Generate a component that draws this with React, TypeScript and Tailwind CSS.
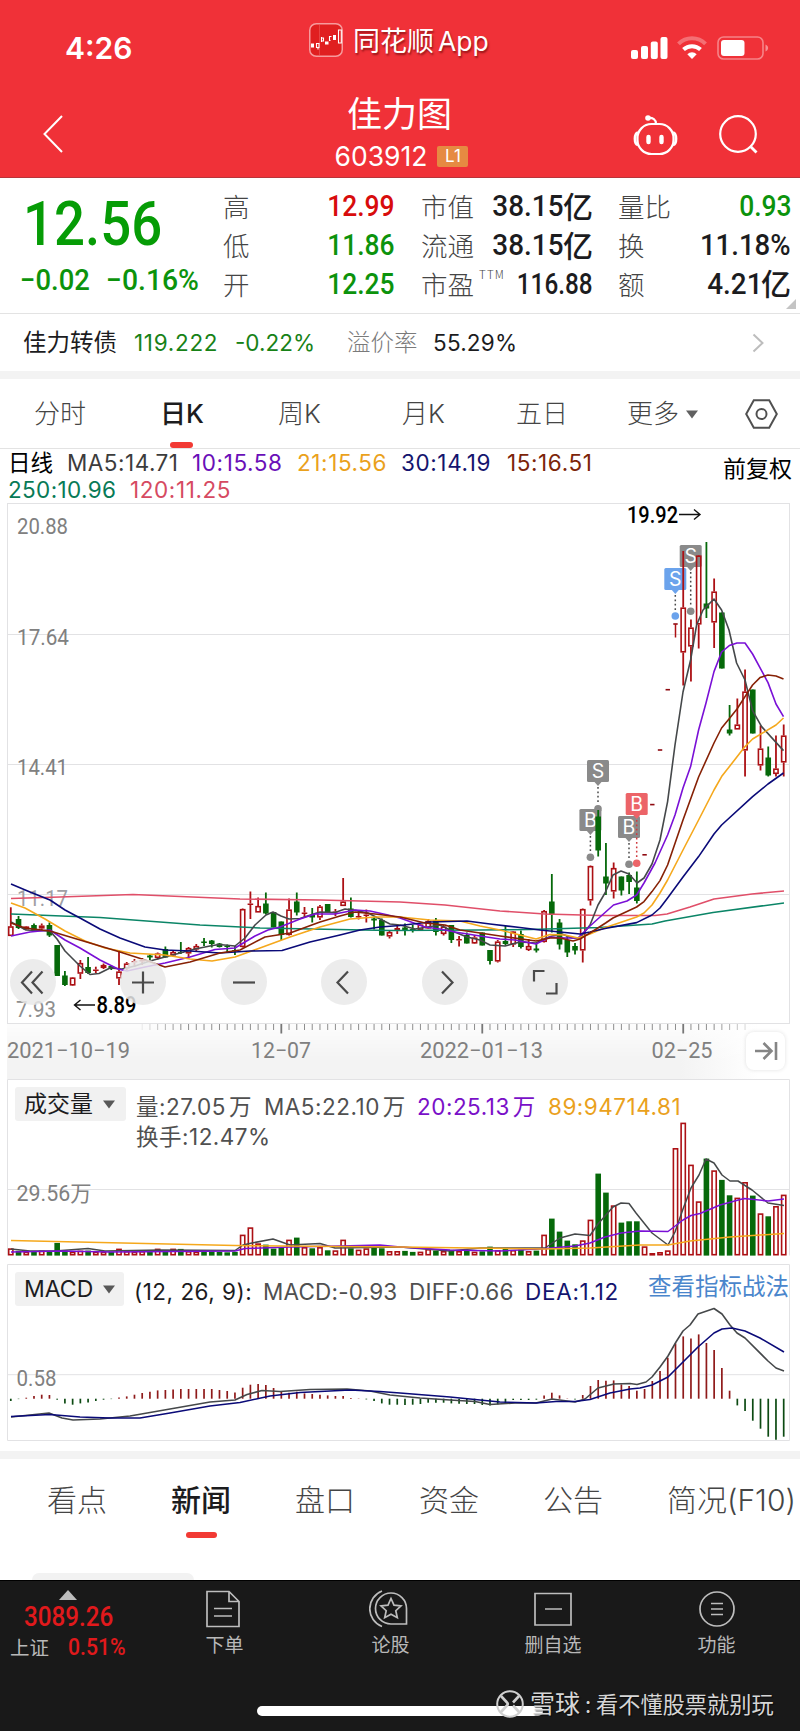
import type { ReactNode } from "react";

type Point = [number, number];
// [high, bodyTop, bodyBottom, low, rising]
type Candle = [number, number, number, number, 0 | 1];

const STEP = 7.729;
const slotX = (i: number) => 10.8 + i * STEP;

const RED = "#ac1014";
const GREEN = "#06690a";

const CANDLES: Candle[] = [
  [907.3, 926.3, 936, 936, 1], [916, 919, 928, 929, 0], [926, 926.5, 929.5, 930, 1], [923.5, 925, 930, 931, 0],
  [923.5, 925.5, 928.5, 931, 1], [922.5, 925, 935.5, 937, 0], [945, 945, 976, 976, 0], [971, 975.5, 985, 986, 0],
  [977, 977.5, 985.5, 986, 1], [960, 963, 973.7, 979, 1], [957, 967, 973, 974, 0], [966.7, 969.5, 971, 973, 1],
  [963.5, 965, 968, 969, 1], [965, 966, 968.5, 970, 0], [950, 971.5, 978.5, 985, 1], [962, 963.5, 968.5, 970, 1],
  [959, 961, 962.5, 967, 1], [958, 960, 961.5, 965, 1], [954.5, 955.5, 957.5, 961, 0], [952.5, 953.5, 958, 959.5, 1],
  [946.5, 949, 957.5, 957.5, 0], [951, 952, 955.5, 956, 1], [942, 952, 953, 954, 0], [947, 948, 953.5, 957, 1],
  [944, 946, 949.5, 951, 1], [938, 941.5, 943, 946, 0], [940, 940.5, 944, 947.5, 0], [943, 943.5, 947, 947.5, 0],
  [944.5, 946, 947, 953, 0], [946, 950, 951, 955, 0], [908.5, 909, 947, 947.5, 1], [891.5, 903.5, 905, 919, 1],
  [897.5, 906, 912.5, 912.5, 1], [892.5, 903.5, 913.5, 914.5, 0], [912, 912, 927.5, 927.5, 0], [921.5, 921.5, 935, 940, 0],
  [898.5, 909.5, 935, 935.5, 1], [892.5, 901.5, 912.5, 915.5, 0], [907, 912.5, 914, 918, 1], [908, 915, 917.5, 922.5, 0],
  [905, 906.5, 917.5, 920, 1], [904, 904, 912.5, 912.5, 0], [909, 911.5, 912.5, 916, 1], [878, 901.5, 906, 906, 1],
  [897.5, 908.5, 917, 917.5, 0], [910, 916, 917.5, 919.5, 1], [909.5, 914.5, 916, 922.5, 1], [917, 918.5, 920.5, 929.5, 0],
  [918.5, 920, 935.5, 935.5, 0], [930, 932, 936.5, 938.5, 1], [926, 928, 930, 934, 1], [923.5, 927.5, 931, 935.5, 0],
  [925, 929, 930.5, 932.5, 0], [924, 924.5, 930, 930, 1], [919, 921, 928.5, 929, 1], [918, 920.5, 932, 935.5, 0],
  [925, 926.5, 934, 935.5, 1], [925, 925, 940, 943, 0], [936, 939, 940.5, 946.5, 1], [932.5, 935, 943.5, 943.5, 0],
  [935, 937.5, 943.5, 944, 1], [932.5, 932.5, 945.5, 945.5, 0], [950, 950, 961, 964.5, 0], [940, 941.5, 961.5, 962.5, 1],
  [926, 941, 944, 945.5, 0], [931, 931.5, 944.5, 947, 1], [930.5, 934, 947, 948.5, 0], [939, 946, 950, 951, 1],
  [944, 948.5, 950.5, 952.5, 0], [910, 911, 942, 942.5, 1], [874, 901.5, 915, 932.5, 0], [919, 922.5, 944.5, 949.5, 0],
  [936, 940, 952.5, 957, 0], [943, 946, 950.5, 954.5, 0], [908.5, 909, 950.5, 962.5, 1], [865.5, 866, 900.5, 905.5, 1],
  [810, 816.5, 850.5, 856.5, 0], [843, 876.5, 883.5, 895, 0], [862.5, 868, 891.5, 898.5, 1], [876.5, 876.5, 890.5, 895.5, 0],
  [872.5, 875, 882, 894, 0], [871.5, 887.5, 901, 903.5, 0], [854.8, 854.8, 854.8, 854.8, 1], [804.6, 804.6, 804.6, 804.6, 1],
  [750, 750, 750, 750, 1], [689.7, 689.7, 689.7, 689.7, 1], [624, 624, 624, 637.5, 1], [551, 607.5, 652.5, 685.5, 1],
  [619.5, 627.5, 646.5, 681.5, 1], [555, 555.5, 624.5, 648.5, 1], [542, 603.5, 608.5, 618, 0], [578.5, 591.5, 622.5, 648, 1],
  [612.5, 612.5, 668.5, 668.5, 0], [705, 729.5, 733.5, 735.5, 0], [698.5, 724.5, 729.5, 729.5, 1], [669.5, 691.5, 750.5, 776.5, 1],
  [689.5, 689.5, 733.5, 733.5, 0], [725.5, 748.5, 765.5, 770.5, 1], [746.5, 757.5, 775.5, 776.5, 0], [735.5, 768.5, 774, 776.5, 1],
  [724.5, 735.5, 762.5, 776.5, 1],
];

// bar heights in px
const VOLUMES = [
  7, 4.7, 3.7, 3.7, 4.7, 4.3, 12.7, 5, 3.7, 4.7, 5, 3.7, 3.7, 3.7, 6.7, 4.3, 3.7, 4.3, 4.3, 6.7, 4.3, 6.7, 6.7, 4.3, 3.7, 5, 4.3,
  3.7, 3.3, 3.7, 20.7, 28, 12, 11, 7, 8, 15.7, 18, 8.3, 7.3, 8.3, 5.3, 5, 15.7, 7.3, 5.7, 7, 7.7, 7.3, 4.3, 4.3, 4.7, 3.7, 3.7,
  6.3, 5, 4.3, 5.7, 4.3, 5.3, 3.7, 4.3, 9, 5.3, 7.7, 5.3, 6, 4.3, 5, 20.7, 37, 24, 15, 11.3, 15, 35.7, 82, 63, 50, 33, 34.3,
  34.3, 9, 2.3, 3.3, 5, 107.3, 132.7, 90.7, 54, 97, 85, 75.7, 60.3, 57.7, 73.3, 60, 42, 39.3, 49.3, 60.7,
];

const MACD_BARS = [
  -2.3, -0.4, 1, 2.7, 4, 3.7, -1, -4.7, -6, -4.7, -3.7, -2.3, -1, -0.4, 1.3, 2.3, 4, 5.7, 7, 8.3, 8.7, 9.3, 9.7, 9.7, 9.7, 9.7, 9.7,
  8.7, 7.7, 6.3, 11, 14, 14.7, 13.7, 10.7, 7, 6, 7, 5.3, 4.7, 4, 3.3, 2.7, 2.7, 0.7, 0.3, -0.7, -2.3, -4.7, -6, -6, -6.3, -6,
  -5.3, -4, -4, -4, -4.7, -5, -5.3, -5.3, -6.3, -6.7, -5.7, -4.7, -1.3, -1.3, -1.3, -1, 3.3, 6, 3.3, 0.3, -0.7, 3.7, 12.7, 18.7,
  18, 18.3, 14.3, 12.7, 8, 9.7, 17.7, 27.7, 41, 55.3, 62.3, 60.3, 64.3, 55.7, 48.7, 30.7, 8, -6.7, -12.3, -22, -30, -38, -41, -38,
];

const PRICE_LINES: { color: string; points: Point[] }[] = [
  {
    color: "#e04f69",
    points: [[11, 898.5], [60, 897], [133, 894.5], [240, 899], [320, 900], [400, 902], [445, 905], [500, 911], [545, 914], [600, 915.5], [655, 915.5], [667, 914], [690, 907], [714, 899], [752, 894], [784, 891]],
  },
  {
    color: "#0b8567",
    points: [[11, 914], [100, 917.5], [200, 925], [260, 928], [390, 930.5], [480, 930], [530, 929.5], [600, 927.5], [652, 924], [665, 921], [713, 912.5], [784, 903]],
  },
  {
    color: "#45484a",
    points: [[11, 922], [26, 930], [50, 931], [57, 939], [65, 951], [80, 966], [90, 974.5], [99, 973.5], [110, 968], [122, 969], [135, 966], [150, 961], [165, 957], [180, 953], [195, 949], [210, 946], [219, 944.5], [235, 946], [245, 938], [255, 925], [266, 915], [273, 912], [281, 916], [289, 919], [300, 918.5], [312, 914.5], [320, 912], [335, 912.5], [345, 909], [356, 910.5], [368, 913], [380, 919], [390, 924], [400, 925], [415, 929], [440, 925], [452, 931], [467, 937], [480, 940], [490, 945], [505, 946], [520, 942], [536, 943], [545, 938.5], [552, 936], [562, 934], [572, 938], [580, 938], [590, 925], [598, 905], [605, 893], [613, 875], [621, 871], [629, 874], [637, 883], [644, 878], [652, 864], [660, 840], [667.6, 801.6], [675, 745], [683, 692], [690.6, 660], [696.6, 625], [703, 610], [714, 599], [721.6, 610], [729, 630], [736.6, 663], [745, 680], [752.6, 710.6], [761.6, 726.6], [783.5, 750.6]],
  },
  {
    color: "#7a10d6",
    points: [[11, 936], [30, 932], [50, 930], [65, 940], [80, 948], [100, 960], [118, 969], [127, 971], [145, 967], [165, 963], [190, 957], [215, 949.5], [235, 948], [255, 936], [268, 930], [280, 927], [300, 919], [315, 914], [335, 914], [355, 910], [370, 911], [388, 915], [400, 918], [425, 927], [440, 929], [455, 932], [480, 936], [500, 939], [515, 940], [536, 944], [550, 937], [565, 938], [578, 938], [590, 926], [600, 917], [613.5, 905], [627, 901], [636.6, 895], [644, 883], [655, 863], [667.6, 835], [675, 815], [683, 788], [690.6, 766.6], [698.6, 730], [706, 703], [714, 671.6], [721.6, 652], [729.3, 645.6], [737, 643], [745, 643], [752.6, 654], [768, 682.6], [776, 704], [783.5, 716.6]],
  },
  {
    color: "#f5a81c",
    points: [[11, 903], [25, 908], [45, 919], [65, 931], [85, 941], [105, 948], [130, 953], [165, 955], [190, 959], [212, 961], [235, 957], [260, 948], [290, 937], [320, 927], [350, 919], [375, 917], [400, 917], [430, 920], [460, 921], [480, 926], [500, 930], [520, 935], [536, 939], [550, 934.5], [565, 935], [578, 938], [590, 934], [604, 928], [636.6, 917], [644, 913], [652, 905], [660, 893], [667.6, 880], [683, 850], [698.6, 820], [714, 790], [721.6, 776.6], [745, 746.6], [752.6, 739], [776, 725], [783.5, 718]],
  },
  {
    color: "#0a0a78",
    points: [[11, 884], [30, 892], [50, 900], [65, 910], [80, 918], [100, 929], [120, 938], [145, 947], [165, 950], [190, 951], [220, 953], [250, 951], [282, 950.5], [310, 942], [340, 935], [360, 930], [380, 927], [400, 925.5], [430, 922], [467, 921], [490, 924], [520, 927.5], [540, 930], [560, 932], [580, 934], [590, 932], [605, 928.5], [636.6, 922.6], [652, 915], [660, 908], [667.6, 898], [683, 877], [698.6, 856.6], [714, 834], [721.6, 825], [752.6, 796.6], [768, 784], [783.5, 773]],
  },
  {
    color: "#862105",
    points: [[11, 923], [25, 928], [50, 931], [70, 937], [90, 943], [120, 952], [145, 960], [165, 967], [190, 962], [220, 953], [240, 950], [265, 937], [290, 933], [320, 922], [340, 916], [355, 912], [375, 914], [400, 917], [425, 923], [445, 925], [460, 930], [480, 933], [500, 936], [536, 941], [550, 938], [560, 938], [573, 941], [580, 939], [590, 933], [605.6, 923], [613, 918], [636.6, 907], [644, 901.6], [652, 891.6], [660, 880.6], [667.6, 865], [683, 820], [698.6, 777], [714, 743], [721.6, 728], [729, 719], [737, 709], [745, 696.6], [752.6, 685], [760, 677.6], [768, 675], [776, 676], [783.5, 679]],
  },
];

const VOLUME_LINES: { color: string; points: Point[] }[] = [
  {
    color: "#45484a",
    points: [[11, 1249], [30, 1251], [55, 1251], [88, 1248.5], [105, 1251], [160, 1250], [235, 1250.5], [243, 1245], [252, 1243], [273, 1239], [290, 1245], [320, 1243.5], [335, 1248], [400, 1247], [450, 1251], [480, 1248], [545, 1248], [560, 1238], [575, 1234], [590, 1235.5], [598, 1224], [605, 1216], [613, 1207], [621, 1203], [629, 1203.5], [636, 1213], [652, 1233], [668, 1245], [675, 1232], [683, 1209], [691, 1188], [699, 1175], [706, 1159], [714, 1163], [722, 1175], [730, 1181], [738, 1181], [752, 1190], [768, 1203], [784, 1205.5]],
  },
  {
    color: "#7a10d6",
    points: [[11, 1252], [60, 1251], [110, 1252], [235, 1251], [245, 1248.5], [290, 1247], [340, 1246], [380, 1245], [400, 1247], [450, 1250], [500, 1251], [540, 1249], [575, 1246], [590, 1243], [605, 1237], [621, 1233], [640, 1231], [668, 1231.5], [683, 1220], [691, 1215.5], [700, 1213.5], [720, 1205], [744, 1198.5], [768, 1201], [784, 1199]],
  },
  {
    color: "#f5a81c",
    points: [[11, 1240.5], [235, 1245.5], [400, 1247], [545, 1249], [590, 1248], [640, 1245], [668, 1245], [690, 1241], [730, 1237], [784, 1233.5]],
  },
];

const MACD_LINES: { color: string; points: Point[] }[] = [
  {
    color: "#45484a",
    points: [[11, 1417], [30, 1415], [49, 1413], [62, 1418], [73, 1420], [100, 1419], [130, 1416], [170, 1409], [210, 1402], [235, 1400], [247, 1394.5], [262, 1390.5], [280, 1391.5], [310, 1389.5], [347, 1389], [370, 1391], [390, 1395], [400, 1396], [420, 1398], [450, 1400], [475, 1401.5], [490, 1404.5], [515, 1403], [536, 1403], [552, 1399], [575, 1402], [585, 1399], [598, 1388], [614, 1384], [630, 1383.5], [637, 1384.5], [646, 1382], [652, 1377], [660, 1367], [668, 1356], [676, 1342], [683, 1331], [690, 1325], [698, 1314], [714, 1308.5], [722, 1314], [730, 1325], [737, 1333], [745, 1338], [768, 1361], [776, 1368], [784, 1371]],
  },
  {
    color: "#0a0a78",
    points: [[11, 1416.5], [50, 1414.5], [80, 1417], [110, 1418], [140, 1418], [170, 1413], [210, 1406], [240, 1402.5], [270, 1396], [300, 1392.5], [350, 1390], [380, 1391.5], [400, 1393], [450, 1397], [500, 1402], [536, 1403], [556, 1401.5], [575, 1401.5], [590, 1399.5], [610, 1393], [630, 1389], [640, 1388], [652, 1385], [668, 1377], [683, 1362], [698, 1347], [714, 1333], [722, 1329], [732, 1328], [745, 1331], [760, 1338], [784, 1352]],
  },
];

const toPoints = (points: Point[]) => points.map((p) => p.join(",")).join(" ");

function Lines({ lines, width = 1.6 }: { lines: { color: string; points: Point[] }[]; width?: number }) {
  return (
    <>
      {lines.map((l, i) => (
        <polyline key={i} points={toPoints(l.points)} fill="none" stroke={l.color} strokeWidth={width} strokeLinejoin="round" />
      ))}
    </>
  );
}

function ChartLabel({ x, y, width, size = 22, className = "fill-[#808080]", children }: {
  x: number; y: number; width: number; size?: number; className?: string; children: ReactNode;
}) {
  return (
    <text x={x} y={y} fontSize={size} textLength={width} lengthAdjust="spacingAndGlyphs"
      className={`font-['Roboto','Noto_Sans_CJK_SC',sans-serif] ${className}`}>
      {children}
    </text>
  );
}

// 买卖点标记
function TradeMark({ x, y, dotY, label, color }: { x: number; y: number; dotY: number; label: string; color: string }) {
  return (
    <g>
      <rect x={x - 11} y={y} width="22" height="22" rx="1.5" fill={color} />
      <path d={`M${x - 3.5} ${y + 22}h7l-3.5 4z`} fill={color} />
      <line x1={x} x2={x} y1={y + 27} y2={dotY - 5} stroke={color === "#ec6468" ? "#d03a3f" : "#4a4a4a"} strokeWidth="1.5" strokeDasharray="1.8 2.6" />
      <circle cx={x} cy={dotY} r="3.8" fill={color} />
      <text x={x} y={y + 18} textAnchor="middle" fontSize="19.5" className="fill-white font-['Inter',sans-serif]">{label}</text>
    </g>
  );
}

function PriceChart() {
  return (
    <svg width="800" height="523" viewBox="0 501 800 523" className="block">
      <rect x="7.5" y="503.5" width="782" height="520" fill="none" stroke="#e2e2e4" />
      {[634.5, 764.5, 894.5].map((y) => (
        <line key={y} x1="8" x2="789" y1={y} y2={y} stroke="#e2e2e4" />
      ))}
      <ChartLabel x={17} y={534} width={51}>20.88</ChartLabel>
      <ChartLabel x={17} y={645} width={52}>17.64</ChartLabel>
      <ChartLabel x={17} y={775} width={51}>14.41</ChartLabel>
      <ChartLabel x={17} y={905.5} width={51} className="fill-[#a0a0a4]">11.17</ChartLabel>
      <ChartLabel x={16} y={1016.5} width={40} className="fill-[#8e8e8e]">7.93</ChartLabel>

      <TradeMark x={675.3} y={568} dotY={616} label="S" color="#6ba3ec" />
      <TradeMark x={690.7} y={545} dotY={611.3} label="S" color="#8a8a8a" />
      <TradeMark x={598} y={760} dotY={808.7} label="S" color="#8a8a8a" />
      <TradeMark x={590.4} y={809} dotY={857.3} label="B" color="#8a8a8a" />
      <TradeMark x={629} y={816} dotY={864.3} label="B" color="#8a8a8a" />
      <TradeMark x={636.7} y={793} dotY={863.3} label="B" color="#ec6468" />

      {CANDLES.map(([high, top, bottom, low, up], i) => {
        const x = slotX(i);
        const color = up ? RED : GREEN;
        if (top === bottom) {
          return (
            <g key={i}>
              <line x1={x - 2.2} x2={x + 2.2} y1={top} y2={top} stroke="#8f0a10" strokeWidth="1.6" />
              <line x1={x} x2={x} y1={top} y2={low} stroke={color} strokeWidth="1.5" />
            </g>
          );
        }
        return (
          <g key={i}>
            <line x1={x} x2={x} y1={high} y2={up ? top : low} stroke={color} strokeWidth="1.8" />
            {up ? <line x1={x} x2={x} y1={bottom} y2={low} stroke={color} strokeWidth="1.8" /> : null}
            {up && bottom - top > 2 ? (
              <rect x={x - 2.1} y={top + 0.7} width="4.2" height={bottom - top - 1.4} fill="none" stroke={color} strokeWidth="1.6" />
            ) : (
              <rect x={x - 2.8} y={top} width="5.6" height={bottom - top} fill={color} />
            )}
          </g>
        );
      })}
      <Lines lines={PRICE_LINES} />

      <ChartLabel x={627} y={522.5} width={51} size={23.5} className="fill-black font-medium">19.92</ChartLabel>
      <path d="M679 514.5h20.5M694 509.5l6 5-6 5" fill="none" stroke="#111" strokeWidth="1.4" />
      <ChartLabel x={96.5} y={1013} width={40} size={23.5} className="fill-black font-medium">8.89</ChartLabel>
      <path d="M95 1005H75M80.5 1000l-6 5 6 5" fill="none" stroke="#111" strokeWidth="1.4" />
    </svg>
  );
}

function DateAxis() {
  return (
    <div className="relative flex h-[55px] w-[800px]">
      <svg width="800" height="55" viewBox="0 1024 800 55" className="block">
        <defs>
          <linearGradient id="axisFade" x1="0" x2="1" y1="0" y2="0">
            <stop offset="0" stopColor="#f3f3f3" />
            <stop offset="0.86" stopColor="#f3f3f3" />
            <stop offset="0.96" stopColor="#ffffff" />
          </linearGradient>
          <linearGradient id="axisTop" x1="0" x2="0" y1="0" y2="1">
            <stop offset="0" stopColor="#fff" stopOpacity="0.8" />
            <stop offset="0.7" stopColor="#fff" stopOpacity="0" />
          </linearGradient>
        </defs>
        <rect x="7" y="1024" width="783" height="55" fill="url(#axisFade)" />
        <rect x="7" y="1024" width="783" height="55" fill="url(#axisTop)" />
        {Array.from({ length: 79 }, (_, n) => n + 17).map((i) => {
          const major = i === 35 || i === 61 || i === 87;
          const edge = Math.min(i - 16, 97 - i, 6) / 6;
          return (
            <line key={i} x1={slotX(i)} x2={slotX(i)} y1="1024" y2={major ? 1033.5 : 1030} stroke={major ? "#777" : "#8e8e8e"}
              strokeWidth={major ? 1.8 : 1} opacity={edge} />
          );
        })}
        <ChartLabel x={7} y={1057.5} width={123}>2021−10−19</ChartLabel>
        <ChartLabel x={251} y={1057.5} width={60}>12−07</ChartLabel>
        <ChartLabel x={420} y={1057.5} width={123}>2022−01−13</ChartLabel>
        <ChartLabel x={651.5} y={1057.5} width={61}>02−25</ChartLabel>
      </svg>
      <button className="absolute top-2 left-[746px] flex h-[38px] w-[39px] items-center justify-center rounded-lg bg-white shadow-[0_0_4px_rgba(0,0,0,0.12)]">
        <svg width="24" height="20" viewBox="0 0 24 20" fill="none" stroke="#858585" strokeWidth="2.6">
          <path d="M1 10h16M9.5 2l8 8-8 8M22 1v18" />
        </svg>
      </button>
    </div>
  );
}

function VolumeChart() {
  return (
    <svg width="800" height="102" viewBox="0 1156 800 102" className="absolute bottom-0 left-0 overflow-visible">
      <path d="M7.5 1255.5V1079.5H789.5V1255.5M8 1189.5H789" fill="none" stroke="#e2e2e4" />
      <ChartLabel x={16.5} y={1200.5} width={75}>29.56万</ChartLabel>
      {VOLUMES.map((h, i) => {
        const up = CANDLES[i][4];
        const x = slotX(i);
        return up ? (
          <rect key={i} x={x - 2.1} y={1255.4 - h + 0.7} width="4.2" height={Math.max(h - 1.4, 1)} fill="none" stroke={RED} strokeWidth="1.6" />
        ) : (
          <rect key={i} x={x - 2.8} y={1255.6 - h} width="5.6" height={h} fill={GREEN} />
        );
      })}
      <Lines lines={VOLUME_LINES} width={1.5} />
    </svg>
  );
}

function MacdChart() {
  return (
    <svg width="800" height="136" viewBox="0 1305 800 136" className="absolute bottom-0 left-0 overflow-visible">
      <path d="M7.5 1264.5H789.5V1440.5H7.5ZM8 1374.7H789" fill="none" stroke="#e2e2e4" />
      <ChartLabel x={16.5} y={1386} width={40}>0.58</ChartLabel>
      {MACD_BARS.map((h, i) => (
        <line key={i} x1={slotX(i)} x2={slotX(i)} y1="1398.7" y2={1398.7 - h} stroke={h > 0 ? "#8f1a1a" : "#0c4a12"} strokeWidth="1.7" />
      ))}
      <Lines lines={MACD_LINES} />
    </svg>
  );
}

function StatusBar() {
  return (
    <div className="flex h-[80px] items-start pl-[65px] text-white">
      <div className="mt-[33px] w-[244px] font-['Inter',sans-serif] text-[30px] leading-none font-semibold">4:26</div>
      <svg width="34" height="34" viewBox="0 0 34 34" className="mt-[23px]">
        <rect x="0.75" y="0.75" width="32.5" height="32.5" rx="6.5" fill="#e01f20" stroke="#f79a9c" strokeWidth="1.5" />
        <path d="M10.5 2v30" stroke="#e84c4c" strokeWidth="0.8" />
        <path d="M2 20.5h3v4H2zM16 18.5h3.5v3H16zM24 12h3v5h-3z" fill="#fff" />
        <path d="M7.5 20.5h2.5v4H7.5zM9 24v2.5M12.5 14v5M12 15h2.5v3H12M22.5 13.5h-2v4h1M29.5 7h2.8v13h-2.8z" fill="none" stroke="#fff" strokeWidth="1.1" />
      </svg>
      <div className="mt-[26px] ml-[10px] w-[278px] font-['Inter','Noto_Sans_CJK_SC',sans-serif] text-[27px] leading-[30px] [text-shadow:1px_2px_2px_rgba(90,0,0,0.6)]">
        同花顺<span className="ml-1 text-[26.5px]">App</span>
      </div>
      <div className="mt-[36px] flex gap-[9px]">
        <svg width="37" height="24" viewBox="0 0 37 24" fill="#fff">
          <rect x="0" y="14" width="7" height="9" rx="2" />
          <rect x="10" y="10" width="7" height="13" rx="2" />
          <rect x="19.8" y="5.5" width="7" height="17.5" rx="2" />
          <rect x="29.5" y="1" width="7" height="22" rx="2" />
        </svg>
        <svg width="30" height="24" viewBox="0 0 30 24" fill="none" stroke="#fff" strokeWidth="4">
          <path d="M1.5 7.8a19 19 0 0 1 27 0" opacity="0.3" />
          <path d="M6.5 13.5a12.5 12.5 0 0 1 17 0" />
          <path d="M10.3 18.2a6.8 6.8 0 0 1 9.4 0L15 23z" fill="#fff" stroke="none" />
        </svg>
        <svg width="52" height="24" viewBox="0 0 52 24" className="ml-px">
          <rect x="1" y="1" width="45" height="22" rx="5.5" fill="none" stroke="#fff" strokeOpacity="0.4" strokeWidth="1.6" />
          <rect x="4" y="4" width="23.5" height="16" rx="3" fill="#fff" />
          <path d="M48.5 8.5c3.5 1.5 3.5 5.5 0 7z" fill="#fff" opacity="0.45" />
        </svg>
      </div>
    </div>
  );
}

function TitleBar() {
  return (
    <div className="flex h-[98px] items-start border-b border-[#b8343a] pl-[43px] text-white">
      <svg width="20" height="38" viewBox="0 0 20 38" className="mt-[35px]">
        <path d="M19 1L1.5 19 19 37" fill="none" stroke="#fff" strokeWidth="2" />
      </svg>
      <div className="ml-[258px] flex w-[161px] flex-col items-center pt-[13px]">
        <div className="mr-[4px] font-['Noto_Sans_CJK_SC',sans-serif] text-[35px] leading-[38px]">佳力图</div>
        <div className="mt-[11px] flex items-center gap-[10px]">
          <span className="font-['Inter',sans-serif] text-[26.5px] leading-[28px]">603912</span>
          <span className="flex h-[21px] w-[31px] items-center justify-center rounded-[2px] bg-[#e68a42] font-['Inter',sans-serif] text-[17px] leading-none">L1</span>
        </div>
      </div>
      <div className="mt-[34px] ml-[151px] flex items-start gap-[41px]">
        <svg width="45" height="42" viewBox="0 0 45 42" fill="none" stroke="#fff" strokeWidth="2.2">
          <circle cx="15" cy="4" r="2.8" fill="#fff" stroke="none" />
          <path d="M15 4c5-.5 8 1.5 8 6" />
          <rect x="4.5" y="10" width="36" height="30" rx="14" />
          <path d="M5 18.5c-4 1-4 11.5 0 12.5M40 18.5c4 1 4 11.5 0 12.5" strokeWidth="2.8" />
          <path d="M15.5 23v5M28.5 23v5" strokeWidth="4.4" strokeLinecap="round" />
        </svg>
        <svg width="39" height="40" viewBox="0 0 39 40" fill="none" stroke="#fff" strokeWidth="2.2">
          <circle cx="19" cy="20" r="17.8" />
          <path d="M31 32l6.5 6.5" strokeWidth="2.8" />
        </svg>
      </div>
    </div>
  );
}

type QuoteRow = { label: ReactNode; value: string; unit?: string; color?: string; scale?: string };

function QuoteColumn({ className, rows }: { className: string; rows: QuoteRow[] }) {
  return (
    <div className={`flex flex-col ${className}`}>
      {rows.map((r, i) => (
        <div key={i} className="flex h-[38.8px] items-center justify-between">
          <span className="flex shrink-0 font-['Noto_Sans_CJK_SC',sans-serif] text-[26.5px] leading-[30px] font-light whitespace-nowrap text-[#454545]">
            {r.label}
          </span>
          <span className={`flex w-0 grow items-center justify-end text-[30px] leading-[30px] font-medium whitespace-nowrap ${r.color ?? "text-[#1c1c1e]"}`}>
            <span className={`origin-right font-['Roboto',sans-serif] ${r.scale ?? "scale-x-[0.88]"}`}>{r.value}</span>
            {r.unit && <span className="-mt-[3px] -ml-px font-['Noto_Sans_CJK_SC',sans-serif] text-[30px] leading-[30px]">{r.unit}</span>}
          </span>
        </div>
      ))}
    </div>
  );
}

function QuotePanel() {
  return (
    <div className="relative flex h-[136px] border-b border-[#e3e3e3] pt-[9px]">
      <div className="w-[223px] shrink-0 font-['Roboto',sans-serif] font-medium whitespace-nowrap text-[#069c06]">
        <div className="mt-[6px] ml-[23px] origin-left scale-x-[0.88] text-[62px] leading-[62px]">12.56</div>
        <div className="mt-[8px] ml-[20px] flex text-[29.5px] leading-[34px] text-[#0c930c]">
          <span className="w-[86px] origin-left scale-x-[0.93]">−0.02</span>
          <span className="origin-left scale-x-[0.96]">−0.16%</span>
        </div>
      </div>
      <QuoteColumn className="w-[172px]" rows={[
        { label: "高", value: "12.99", color: "text-[#d80c0c]" },
        { label: "低", value: "11.86", color: "text-[#0c930c]" },
        { label: "开", value: "12.25", color: "text-[#0c930c]" },
      ]} />
      <QuoteColumn className="ml-[26px] w-[172px]" rows={[
        { label: "市值", value: "38.15", unit: "亿", scale: "scale-x-[0.93]" },
        { label: "流通", value: "38.15", unit: "亿", scale: "scale-x-[0.93]" },
        {
          label: <>市盈<span className="-mt-px ml-[5px] text-[11.5px] leading-[12px] tracking-[1.2px]">TTM</span></>,
          value: "116.88",
          scale: "scale-x-[0.81]",
        },
      ]} />
      <QuoteColumn className="ml-[25px] w-[173px]" rows={[
        { label: "量比", value: "0.93", color: "text-[#0c930c]" },
        { label: "换", value: "11.18%", scale: "scale-x-[0.92]" },
        { label: "额", value: "4.21", unit: "亿", scale: "scale-x-[0.93]" },
      ]} />
      <svg width="10" height="10" className="absolute right-1 bottom-[4px]"><path d="M10 0v10H0z" fill="#c4c4c4" /></svg>
    </div>
  );
}

function BondRow() {
  return (
    <div className="flex h-[57px] items-center pl-[23px] font-['Inter','Noto_Sans_CJK_SC',sans-serif] text-[22.5px] leading-[30px] whitespace-nowrap">
      <span className="w-[111px] text-[23.5px] text-[#1c1c1e]">佳力转债</span>
      <span className="w-[101px] tracking-[0.7px] text-[#178217]">119.222</span>
      <span className="w-[112px] text-[#178217]">-0.22%</span>
      <span className="w-[86px] text-[23.5px] font-light text-[#7a7a7a]">溢价率</span>
      <span className="w-[319px] tracking-[0.2px] text-[#1c1c1e]">55.29%</span>
      <svg width="13" height="20" viewBox="0 0 13 20"><path d="M1.5 1.5l9 8.5-9 8.5" fill="none" stroke="#bdbdbd" strokeWidth="2" /></svg>
    </div>
  );
}

function PeriodTabs() {
  return (
    <div className="flex h-[70px] items-start border-b border-[#e3e3e3] pt-[20px] pl-[34px] font-['Inter','Noto_Sans_CJK_SC',sans-serif] text-[26px] leading-[30px] font-light whitespace-nowrap text-[#454545]">
      <span className="w-[126px]">分时</span>
      <span className="flex w-[118px] flex-col font-medium text-[#1c1c1e]">
        <span>日K</span>
        <span className="mt-[13px] ml-[9.5px] h-[6px] w-[23px] rounded-full bg-[#f23a34]" />
      </span>
      <span className="w-[124px]">周K</span>
      <span className="w-[114px]">月K</span>
      <span className="w-[111px]">五日</span>
      <span className="flex w-[118px] items-center">
        更多
        <svg width="12" height="9" className="ml-[7px]"><path d="M0 0.5h12l-6 8z" fill="#606060" /></svg>
      </span>
      <svg width="33" height="30" viewBox="0 0 33 30" fill="none" stroke="#505050" strokeWidth="2">
        <path d="M8.8 1.2h15.4L31.8 15l-7.6 13.8H8.8L1.2 15z" />
        <circle cx="16.5" cy="15" r="5" />
      </svg>
    </div>
  );
}

function MaLegend() {
  return (
    <div className="flex h-[52px] justify-between pr-[8px] pl-[8px] font-['Inter','Noto_Sans_CJK_SC',sans-serif] text-[22.5px] leading-[27px] whitespace-nowrap">
      <div className="tracking-[0.6px]">
        <div className="flex">
          <span className="w-[59px] tracking-normal text-black">日线</span>
          <span className="w-[125px] tracking-[0.5px] text-[#3c3c3c]">MA5:14.71</span>
          <span className="w-[105px] text-[#6a0fb8]">10:15.58</span>
          <span className="w-[104px] text-[#eaa11c]">21:15.56</span>
          <span className="w-[106px] text-[#14146e]">30:14.19</span>
          <span className="text-[#7c2408]">15:16.51</span>
        </div>
        <div className="flex tracking-[0.35px]">
          <span className="w-[122px] text-[#087a56]">250:10.96</span>
          <span className="tracking-[0.6px] text-[#d64a62]">120:11.25</span>
        </div>
      </div>
      <span className="pt-[7px] text-[23px] text-black">前复权</span>
    </div>
  );
}

function ChartButtons() {
  const icons = [
    "M22 12.5L12 23.5l10 11M32.5 12.5l-10 11 10 11",
    "M12 23.5h22M23 12.5v22",
    "M12 23.5h22",
    "M27 12.5l-10.5 11 10.5 11",
    "M20 12.5l10.5 11-10.5 11",
    "M12 22.5v-10.5h10.5M34.5 24v10.5H24",
  ];
  return (
    <div className="absolute bottom-[19px] left-[10px] flex gap-[54.5px]">
      {icons.map((d, i) => (
        <button key={i} className="h-[46px] w-[46px] rounded-full bg-[#e9e9e9]/85 first:mr-[9.5px]">
          <svg width="46" height="46" viewBox="0 0 46 46"><path d={d} fill="none" stroke="#4a4a4a" strokeWidth="2.2" /></svg>
        </button>
      ))}
    </div>
  );
}

function IndicatorSelect({ className, children }: { className: string; children: ReactNode }) {
  return (
    <button className={`flex h-[34px] shrink-0 items-center rounded-[3px] bg-[#f1f1f1] pl-[9px] text-[23px] leading-none text-[#1c1c1e] ${className}`}>
      {children}
      <svg width="12" height="9" className="ml-[10px]"><path d="M0 0.5h12l-6 8z" fill="#585858" /></svg>
    </button>
  );
}

const NEWS_TABS = ["看点", "新闻", "盘口", "资金", "公告", "简况(F10)"];

function NewsTabs() {
  return (
    <div className="flex h-[121px] flex-col justify-between">
      <div className="flex pt-[23px] pl-[47px] font-['Inter','Noto_Sans_CJK_SC',sans-serif] text-[30px] leading-[36px] whitespace-nowrap">
        {NEWS_TABS.map((t) =>
          t === "新闻" ? (
            <span key={t} className="flex w-[124px] shrink-0 flex-col font-medium text-[#1c1c1e]">
              {t}
              <span className="mt-[14px] ml-[15px] h-[6px] w-[31px] rounded-full bg-[#f23a34]" />
            </span>
          ) : (
            <span key={t} className="w-[124px] shrink-0 font-light text-[#454545]">{t}</span>
          ),
        )}
      </div>
      <div className="ml-[32px] h-[7px] w-[162px] rounded-t-lg bg-[#f2f2f2]" />
    </div>
  );
}

function NavItem({ label, className, children }: { label: string; className: string; children: ReactNode }) {
  return (
    <div className={`flex flex-col items-center pt-[9px] ${className}`}>
      <svg width="44" height="38" viewBox="0 0 44 38" fill="none" stroke="#bdbdbd" strokeWidth="1.7">{children}</svg>
      <span className="mt-[6px] font-['Noto_Sans_CJK_SC',sans-serif] text-[19px] leading-[20px] text-[#b8b8b8]">{label}</span>
    </div>
  );
}

function BottomBar() {
  return (
    <div className="relative flex h-[151px] border-t border-black bg-[#191919]">
      <div className="w-[150px] shrink-0 text-[#e0191c]">
        <svg width="18" height="10" className="mt-[9px] ml-[58.5px] block"><path d="M9 0l9 10H0z" fill="#bdbdbd" /></svg>
        <div className="mt-[2px] ml-[24px] h-[30px] origin-left scale-x-[0.88] font-['Roboto',sans-serif] text-[27.5px] leading-[30px] font-medium">3089.26</div>
        <div className="mt-px ml-[10px] flex items-center leading-[28px]">
          <span className="w-[58px] font-['Noto_Sans_CJK_SC',sans-serif] text-[19.5px] text-[#b8b8b8]">上证</span>
          <span className="origin-left scale-x-[0.9] font-['Roboto',sans-serif] text-[23.5px] font-medium">0.51%</span>
        </div>
      </div>
      <NavItem label="下单" className="w-[149px]">
        <path d="M4 1.5h22l10 10V36.5H4zM26 1.5v10h10M11 18.5h18M11 26h18" />
      </NavItem>
      <NavItem label="论股" className="w-[183px]">
        <path d="M22 3a15.5 15.5 0 1 0 0 31H37.5V18.5A15.5 15.5 0 0 0 22 3z" />
        <path d="M13 1a19 19 0 0 0 0 35.5" />
        <path d="M22 8.5l3 6.6 7 .8-5.2 4.8 1.5 7L22 24.2l-6.3 3.5 1.5-7-5.2-4.8 7-.8z" />
      </NavItem>
      <NavItem label="删自选" className="w-[142px]">
        <path d="M4 3.5h36v31.5H4zM14 19h17" />
      </NavItem>
      <NavItem label="功能" className="ml-[18px] w-[149px]">
        <circle cx="22" cy="19" r="17" />
        <path d="M16 13.5h12M16 19h12M16 24.5h12" />
      </NavItem>
      <div className="absolute top-[125px] left-[257px] h-[10px] w-[286px] rounded-full bg-white" />
      <div className="absolute top-[109px] left-[496px] flex items-center text-[#d6d6d6]">
        <svg width="28" height="28" viewBox="0 0 28 28" fill="none" stroke="#cfcfcf" strokeWidth="2">
          <circle cx="14" cy="14" r="12.8" />
          <path d="M5 6l6 6.5c1 1 1 2 0 3l-6 6.5M23 6l-6 6.5M23 22l-6-6.5" strokeWidth="2.6" />
        </svg>
        <span className="-mt-[3px] ml-[6px] font-['Noto_Sans_CJK_SC',sans-serif] text-[22.2px] leading-[28px] whitespace-nowrap [text-shadow:1px_1px_1px_rgba(0,0,0,0.6)]">
          <span className="text-[25px]">雪球</span> : 看不懂股票就别玩
        </span>
      </div>
    </div>
  );
}

export default function App() {
  return (
    <div className="h-[1731px] w-[800px] overflow-hidden bg-white">
      <div className="bg-[#f03138]">
        <StatusBar />
        <TitleBar />
      </div>
      <QuotePanel />
      <BondRow />
      <div className="h-[8px] bg-[#f3f3f3]" />
      <PeriodTabs />
      <MaLegend />
      <div className="relative">
        <PriceChart />
        <ChartButtons />
      </div>
      <DateAxis />

      {/* 成交量 */}
      <div className="relative flex h-[179px] pt-[8px] pl-[15px] font-['Inter','Noto_Sans_CJK_SC',sans-serif] text-[22.5px]">
        <VolumeChart />
        <IndicatorSelect className="w-[111px]">成交量</IndicatorSelect>
        <div className="ml-[10px] pt-[5px] leading-[30px] tracking-[0.5px] whitespace-nowrap text-[#505050]">
          <div className="flex">
            <span className="w-[128px]">量:27.05<span className="ml-[3px]">万</span></span>
            <span className="w-[153px]">MA5:22.10<span className="ml-[3px]">万</span></span>
            <span className="w-[131px] text-[#7a10c8]">20:25.13<span className="ml-[3px]">万</span></span>
            <span className="text-[#eaa11c]">89:94714.81</span>
          </div>
          <div>换手:12.47%</div>
        </div>
      </div>

      {/* MACD */}
      <div className="relative mt-[6px] flex h-[177px] pt-[8px] pl-[15px] font-['Inter','Noto_Sans_CJK_SC',sans-serif] text-[22.5px]">
        <MacdChart />
        <IndicatorSelect className="w-[109px]">MACD</IndicatorSelect>
        <div className="ml-[10px] flex pt-[5px] leading-[30px] whitespace-nowrap text-[#505050]">
          <span className="w-[129px] tracking-[0.5px] text-[#1c1c1e]">(12, 26, 9):</span>
          <span className="w-[146px] tracking-[0.2px]">MACD:-0.93</span>
          <span className="w-[116px] tracking-[0.2px]">DIFF:0.66</span>
          <span className="w-[123px] tracking-[0.7px] text-[#14146e]">DEA:1.12</span>
          <span className="-mt-[5px] text-[23.5px] text-[#4a86cc]">查看指标战法</span>
        </div>
      </div>

      <div className="mt-[10px] h-[8px] bg-[#f3f3f3]" />
      <NewsTabs />
      <BottomBar />
    </div>
  );
}
